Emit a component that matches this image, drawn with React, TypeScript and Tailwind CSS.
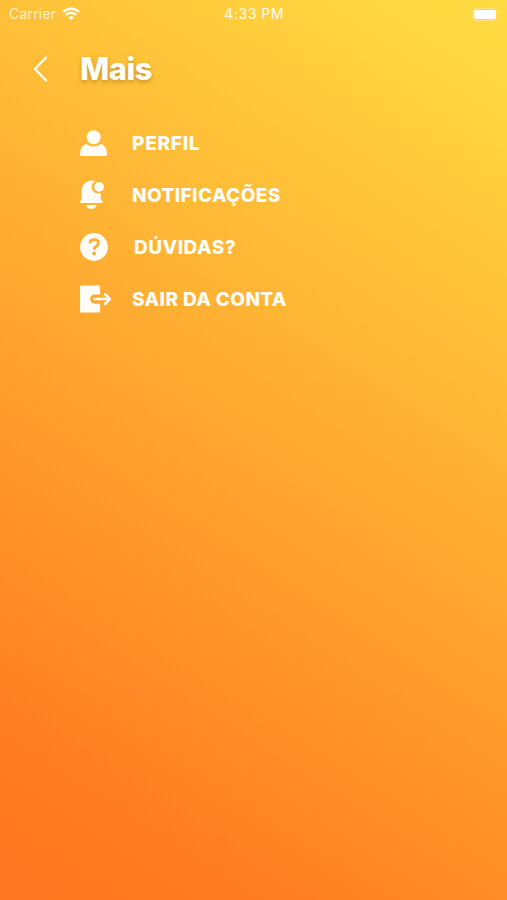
import type { ReactNode } from "react";

function ProfileIcon() {
  return (
    <svg width="28" height="26" viewBox="0 0 28 26" fill="#fffdf5">
      <circle cx="13.7" cy="7.2" r="7" />
      <path d="M6.3 13.700c2 1.800 4.400 2.700 7.300 2.700s5.300-.9 7.300-2.700c3.700 1.700 6.100 5.300 6.100 9.500v1.200c0 1-.6 1.600-1.600 1.600H1.700C.7 26 .1 25.400.1 24.400v-1.200c0-4.200 2.500-7.800 6.200-9.500Z" />
    </svg>
  );
}

function BellIcon() {
  return (
    <svg width="25" height="30" viewBox="0 0 25 30" fill="#fffdf5">
      <path d="M15.500 1A10.500 10.500 0 0 0 12.200.4C6 .4 1.700 5 1.700 10.600v8.600L.1 21.300c-.4.800 0 1.600.9 1.600h20.500c.9 0 1.300-.8.900-1.600L20.700 19v-6A6.300 6.300 0 0 1 15.500 1Z" />
      <circle cx="19.100" cy="6.900" r="4.900" />
      <path d="M6 25h10.600c-.9 2.600-2.700 3.900-5.300 3.900S6.900 27.600 6 25Z" />
    </svg>
  );
}

function HelpIcon() {
  return (
    <svg width="28" height="28" viewBox="0 0 28 28" fill="none">
      <circle cx="14" cy="14" r="13.900" fill="#fffdf5" />
      <path d="M9.900 10.500c.1-2.500 1.700-3.900 4.300-3.900 2.500 0 4.200 1.400 4.200 3.500 0 1.700-.9 2.600-2.300 3.400-1.400.8-1.900 1.400-1.900 2.700v.5" stroke="#ffad33" strokeWidth="2.800" />
      <circle cx="14.100" cy="20.500" r="1.900" fill="#ffad33" />
    </svg>
  );
}

function ExitIcon() {
  return (
    <svg width="32" height="28" viewBox="0 0 32 28" fill="none">
      <path d="M1.300.4h17.600c.8 0 1.200.4 1.200 1.200v7.900h-5.400a4.600 4.600 0 0 0 0 9.200h5.400v7.700c0 .8-.4 1.200-1.200 1.200H1.300C.5 27.600.1 27.200.1 26.400V1.600C.1.800.5.400 1.300.4Z" fill="#fffdf5" />
      <path d="M14.200 14.100h15M25 9.200l4.900 4.900-4.900 4.900" stroke="#fffdf5" strokeWidth="2.500" strokeLinecap="round" strokeLinejoin="round" />
    </svg>
  );
}

type MenuItem = { label: string; icon: ReactNode; textClass: string };

const items: MenuItem[] = [
  { label: "PERFIL", icon: <ProfileIcon />, textClass: "tracking-[0.75px]" },
  { label: "NOTIFICAÇÕES", icon: <BellIcon />, textClass: "tracking-[0.42px]" },
  { label: "DÚVIDAS?", icon: <HelpIcon />, textClass: "ml-[2px] tracking-[0.5px]" },
  { label: "SAIR DA CONTA", icon: <ExitIcon />, textClass: "tracking-[0.4px]" },
];

export default function App() {
  return (
    <div className="flex h-[900px] w-[507px] flex-col overflow-hidden bg-[linear-gradient(33deg,#ff7720_0%,#ff7920_10%,#ffb334_61%,#ffd740_93%,#ffda40_100%)] font-['Inter',sans-serif] text-[#fffdf5]">
      <header className="grid h-[28px] grid-cols-3 items-center text-[14px] leading-none">
        <div className="flex items-center gap-[6px] pl-[9px] text-[#fff2cd]">
          <span className="tracking-[0.2px]">Carrier</span>
          <svg width="18" height="14" viewBox="0 0 18 14" fill="none" stroke="#fffdf5" strokeWidth="2.400">
            <path d="M1 5a11.400 11.400 0 0 1 16 0M3.900 8a7.300 7.300 0 0 1 10.200 0" />
            <path d="m9 13.300-2.800-2.800a4 4 0 0 1 5.600 0Z" fill="#fffdf5" stroke="none" />
          </svg>
        </div>
        <span className="whitespace-nowrap pl-px text-center text-[14px] font-medium tracking-[0.5px] text-[#fff6dc]">4:33 PM</span>
        <div className="flex items-center justify-end gap-px pr-[7px]">
          <div className="rounded-[4px] border border-[#ffe27a] p-px">
            <div className="h-[9px] w-[22px] rounded-[2px] bg-white" />
          </div>
          <div className="h-1 w-px rounded-r bg-[#ffe27a]" />
        </div>
      </header>

      <div className="flex h-[82px] items-center pl-[33px]">
        <svg width="15" height="26" viewBox="0 0 15 26" fill="none" stroke="#fffdf5" strokeWidth="2.300" strokeLinecap="round" strokeLinejoin="round">
          <path d="M13 1.500 2 13l11 11.500" />
        </svg>
        <h1 className="-mt-[2px] ml-[32px] text-[31px] font-extrabold leading-none tracking-[-0.5px] [text-shadow:0_2px_4px_rgba(110,75,0,0.4)]">Mais</h1>
      </div>

      <nav className="flex flex-col pl-[80px] pt-[7px]">
        {items.map(({ label, icon, textClass }) => (
          <div key={label} className="flex h-[52px] items-center">
            <div className="flex w-[52px] shrink-0 items-center">{icon}</div>
            <span className={`whitespace-nowrap text-[19px] font-extrabold leading-none ${textClass}`}>{label}</span>
          </div>
        ))}
      </nav>
    </div>
  );
}
